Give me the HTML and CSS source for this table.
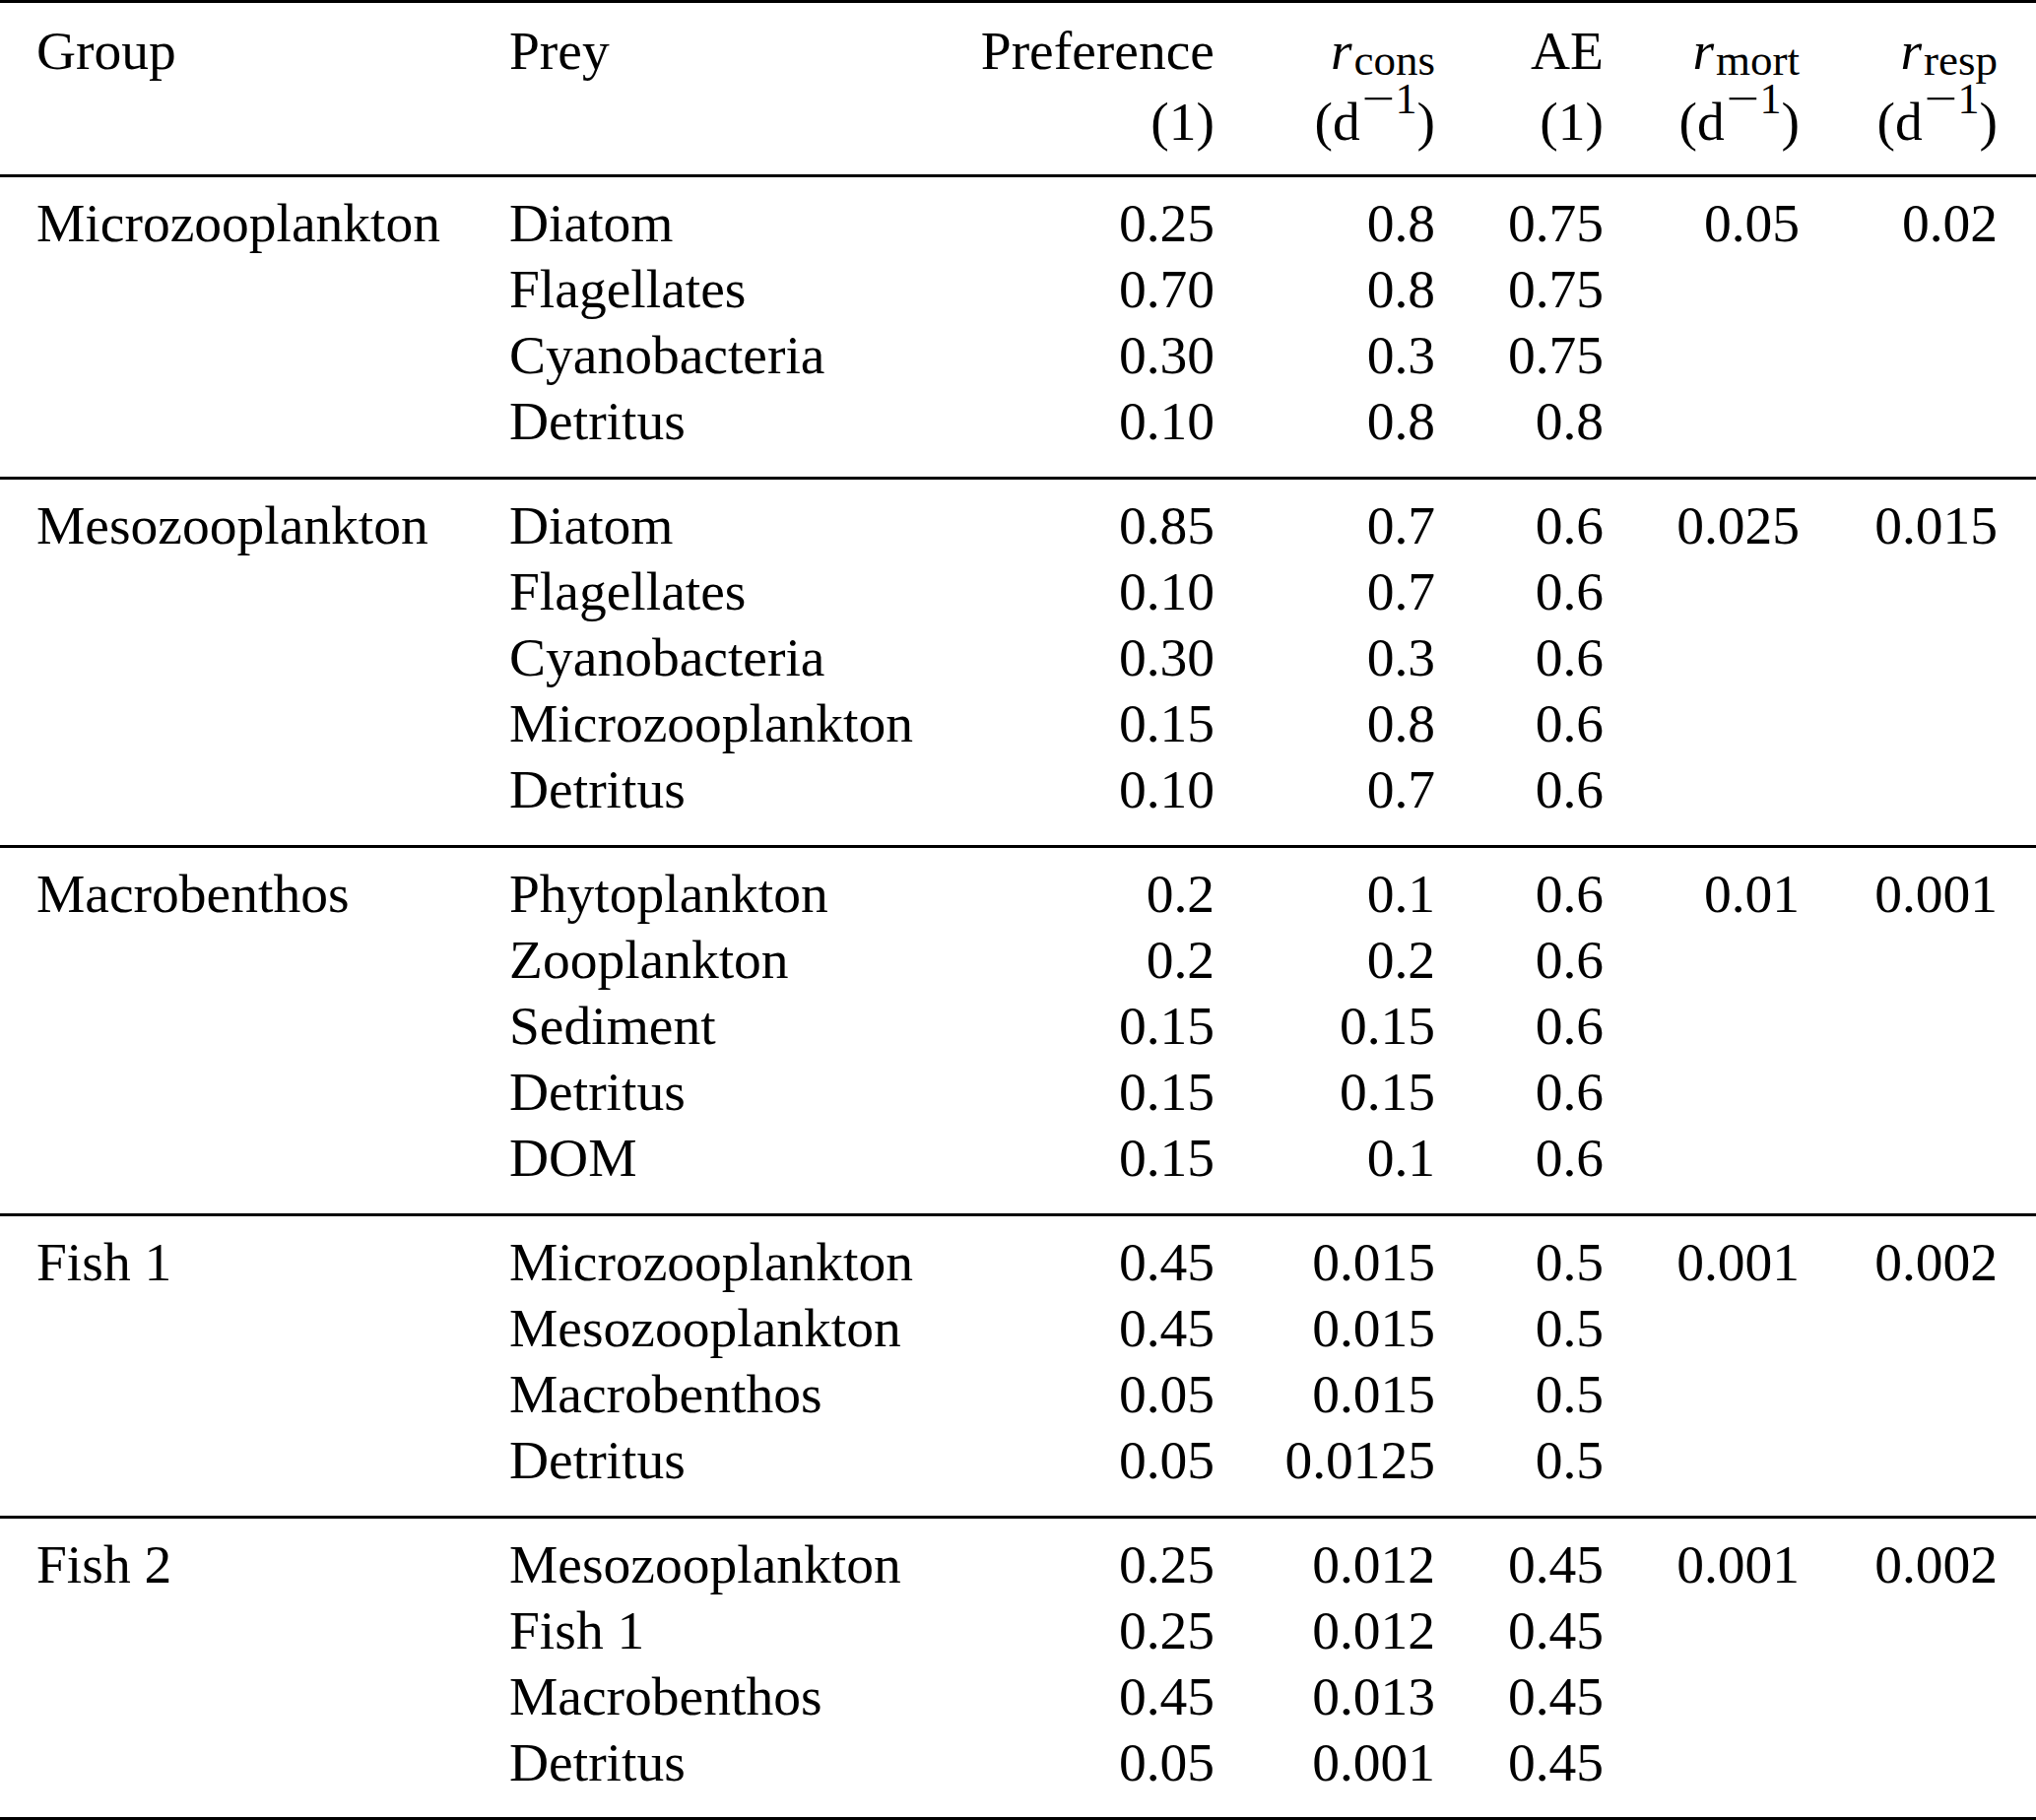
FILE: index.html
```html
<!DOCTYPE html>
<html lang="en">
<head>
<meta charset="utf-8">
<title>Grazing parameters</title>
<link rel="stylesheet" href="styles.css">
</head>
<body>
<table class="params">
  <colgroup>
    <col class="w-group">
    <col class="w-prey">
    <col class="w-pref">
    <col class="w-cons">
    <col class="w-ae">
    <col class="w-mort">
    <col class="w-resp">
  </colgroup>
  <thead>
    <tr class="head-top">
      <th class="txt">Group</th>
      <th class="txt">Prey</th>
      <th class="num">Preference</th>
      <th class="num"><i>r</i><span class="sub">cons</span></th>
      <th class="num">AE</th>
      <th class="num"><i>r</i><span class="sub">mort</span></th>
      <th class="num"><i>r</i><span class="sub">resp</span></th>
    </tr>
    <tr class="head-unit">
      <th class="txt"></th>
      <th class="txt"></th>
      <th class="num">(1)</th>
      <th class="num">(d<span class="sup"><span class="minus">−</span>1</span>)</th>
      <th class="num">(1)</th>
      <th class="num">(d<span class="sup"><span class="minus">−</span>1</span>)</th>
      <th class="num">(d<span class="sup"><span class="minus">−</span>1</span>)</th>
    </tr>
  </thead>
  <tbody>
    <tr class="first"><td class="txt">Microzooplankton</td><td class="txt">Diatom</td><td class="num">0.25</td><td class="num">0.8</td><td class="num">0.75</td><td class="num">0.05</td><td class="num">0.02</td></tr>
    <tr><td class="txt"></td><td class="txt">Flagellates</td><td class="num">0.70</td><td class="num">0.8</td><td class="num">0.75</td><td class="num"></td><td class="num"></td></tr>
    <tr><td class="txt"></td><td class="txt">Cyanobacteria</td><td class="num">0.30</td><td class="num">0.3</td><td class="num">0.75</td><td class="num"></td><td class="num"></td></tr>
    <tr class="last"><td class="txt"></td><td class="txt">Detritus</td><td class="num">0.10</td><td class="num">0.8</td><td class="num">0.8</td><td class="num"></td><td class="num"></td></tr>
  </tbody>
  <tbody>
    <tr class="first"><td class="txt">Mesozooplankton</td><td class="txt">Diatom</td><td class="num">0.85</td><td class="num">0.7</td><td class="num">0.6</td><td class="num">0.025</td><td class="num">0.015</td></tr>
    <tr><td class="txt"></td><td class="txt">Flagellates</td><td class="num">0.10</td><td class="num">0.7</td><td class="num">0.6</td><td class="num"></td><td class="num"></td></tr>
    <tr><td class="txt"></td><td class="txt">Cyanobacteria</td><td class="num">0.30</td><td class="num">0.3</td><td class="num">0.6</td><td class="num"></td><td class="num"></td></tr>
    <tr><td class="txt"></td><td class="txt">Microzooplankton</td><td class="num">0.15</td><td class="num">0.8</td><td class="num">0.6</td><td class="num"></td><td class="num"></td></tr>
    <tr class="last"><td class="txt"></td><td class="txt">Detritus</td><td class="num">0.10</td><td class="num">0.7</td><td class="num">0.6</td><td class="num"></td><td class="num"></td></tr>
  </tbody>
  <tbody>
    <tr class="first"><td class="txt">Macrobenthos</td><td class="txt">Phytoplankton</td><td class="num">0.2</td><td class="num">0.1</td><td class="num">0.6</td><td class="num">0.01</td><td class="num">0.001</td></tr>
    <tr><td class="txt"></td><td class="txt">Zooplankton</td><td class="num">0.2</td><td class="num">0.2</td><td class="num">0.6</td><td class="num"></td><td class="num"></td></tr>
    <tr><td class="txt"></td><td class="txt">Sediment</td><td class="num">0.15</td><td class="num">0.15</td><td class="num">0.6</td><td class="num"></td><td class="num"></td></tr>
    <tr><td class="txt"></td><td class="txt">Detritus</td><td class="num">0.15</td><td class="num">0.15</td><td class="num">0.6</td><td class="num"></td><td class="num"></td></tr>
    <tr class="last"><td class="txt"></td><td class="txt">DOM</td><td class="num">0.15</td><td class="num">0.1</td><td class="num">0.6</td><td class="num"></td><td class="num"></td></tr>
  </tbody>
  <tbody>
    <tr class="first"><td class="txt">Fish 1</td><td class="txt">Microzooplankton</td><td class="num">0.45</td><td class="num">0.015</td><td class="num">0.5</td><td class="num">0.001</td><td class="num">0.002</td></tr>
    <tr><td class="txt"></td><td class="txt">Mesozooplankton</td><td class="num">0.45</td><td class="num">0.015</td><td class="num">0.5</td><td class="num"></td><td class="num"></td></tr>
    <tr><td class="txt"></td><td class="txt">Macrobenthos</td><td class="num">0.05</td><td class="num">0.015</td><td class="num">0.5</td><td class="num"></td><td class="num"></td></tr>
    <tr class="last"><td class="txt"></td><td class="txt">Detritus</td><td class="num">0.05</td><td class="num">0.0125</td><td class="num">0.5</td><td class="num"></td><td class="num"></td></tr>
  </tbody>
  <tbody class="final">
    <tr class="first"><td class="txt">Fish 2</td><td class="txt">Mesozooplankton</td><td class="num">0.25</td><td class="num">0.012</td><td class="num">0.45</td><td class="num">0.001</td><td class="num">0.002</td></tr>
    <tr><td class="txt"></td><td class="txt">Fish 1</td><td class="num">0.25</td><td class="num">0.012</td><td class="num">0.45</td><td class="num"></td><td class="num"></td></tr>
    <tr><td class="txt"></td><td class="txt">Macrobenthos</td><td class="num">0.45</td><td class="num">0.013</td><td class="num">0.45</td><td class="num"></td><td class="num"></td></tr>
    <tr class="last"><td class="txt"></td><td class="txt">Detritus</td><td class="num">0.05</td><td class="num">0.001</td><td class="num">0.45</td><td class="num"></td><td class="num"></td></tr>
  </tbody>
</table>
</body>
</html>
```

FILE: styles.css
```css
html, body {
  margin: 0;
  padding: 0;
  background: #ffffff;
  overflow: hidden;
}

.params {
  font-family: "Liberation Serif", "Times New Roman", serif;
  font-size: 55.5px;
  line-height: 67px;
  color: #000000;
  width: 2067px;
  table-layout: fixed;
  border-collapse: separate;
  border-spacing: 0;
}

.w-group { width: 517px; }
.w-prey { width: 450px; }
.w-pref { width: 266px; }
.w-cons { width: 224px; }
.w-ae { width: 171px; }
.w-mort { width: 199px; }
.w-resp { width: 240px; }

.params th,
.params td {
  padding: 0;
  font-weight: normal;
  white-space: nowrap;
  vertical-align: baseline;
}

.params .txt { text-align: left; }
.params .num { text-align: right; }

.params tr > :first-child { padding-left: 37px; }
.params tr > :last-child { padding-right: 39px; }

.head-top th {
  border-top: 3px solid #000000;
  padding-top: 15px;
  padding-bottom: 5px;
}

.head-unit th {
  padding-bottom: 20px;
}

.params i {
  font-style: italic;
}

.sub {
  font-size: 45px;
  line-height: 0;
  vertical-align: -6px;
  margin-left: 2px;
}

.sup {
  font-size: 44px;
  line-height: 0;
  vertical-align: 27px;
  margin-left: 2px;
}

.minus {
  display: inline-block;
  transform: scaleX(1.35);
  margin: 0 5px 0 4px;
}

tr.first td {
  border-top: 3px solid #000000;
  padding-top: 13px;
}

tr.last td {
  padding-bottom: 23px;
}

tbody.final tr.last td {
  padding-bottom: 22px;
  border-bottom: 3px solid #000000;
}
```
